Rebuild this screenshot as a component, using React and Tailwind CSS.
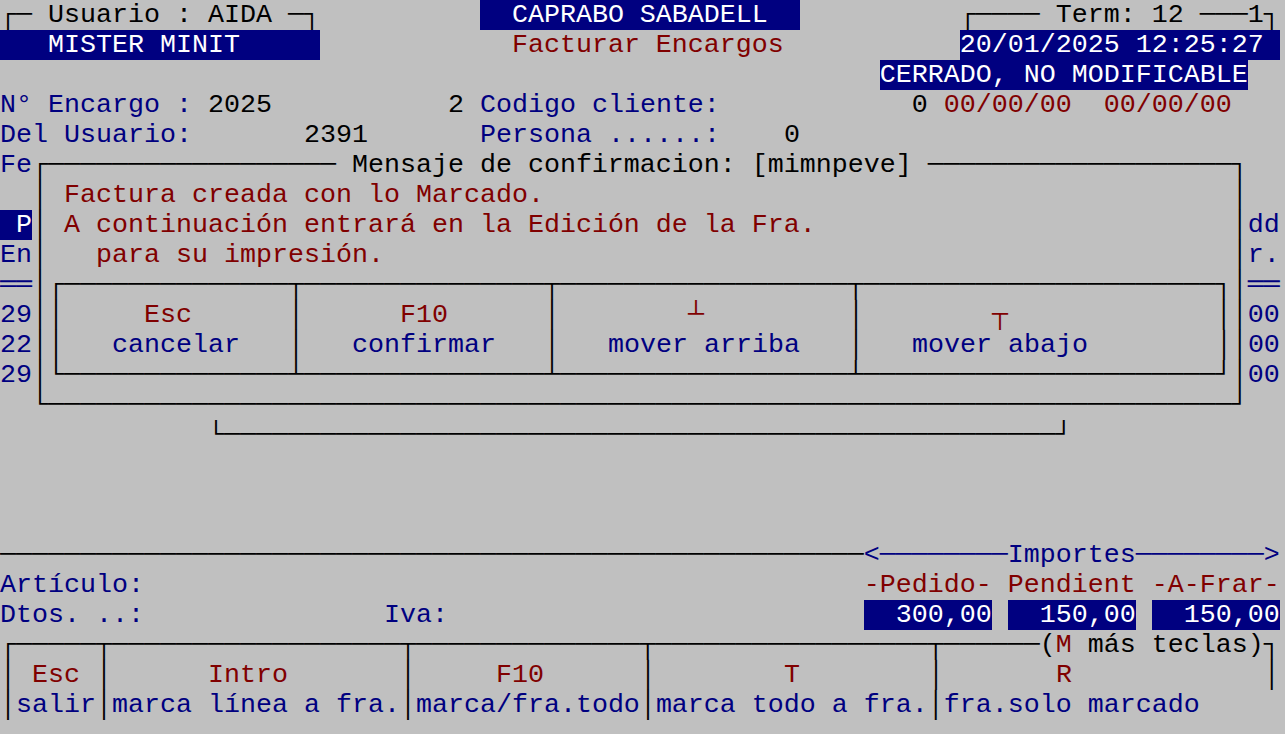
import React from 'react';

const L = (n) => '─'.repeat(n);
const S = (n) => ' '.repeat(n);

const tone = {
  k: 'text-black',
  b: 'text-[#000080]',
  r: 'text-[#800000]',
  h: 'bg-[#000080] text-white',
};

// each row is 80 cells wide, segments are [text, tone]
const screen = [
  [[`┌─ Usuario : AIDA ─┐`, 'k'], [S(10)], ['  CAPRABO SABADELL  ', 'h'], [S(10)], [`┌${L(4)} Term: 12 ${L(3)}1┐`, 'k']],
  [['   MISTER MINIT     ', 'h'], [S(12)], ['Facturar Encargos', 'r'], [S(11)], ['20/01/2025 12:25:27 ', 'h']],
  [[S(55)], ['CERRADO, NO MODIFICABLE', 'h']],
  [
    ['N° Encargo : ', 'b'], ['2025', 'k'], [S(11)], ['2', 'k'], [S(1)], ['Codigo cliente:', 'b'], [S(12)],
    ['0', 'k'], [S(1)], ['00/00/00', 'r'], [S(2)], ['00/00/00', 'r'],
  ],
  [['Del Usuario:', 'b'], [S(7)], ['2391', 'k'], [S(7)], ['Persona ......:', 'b'], [S(4)], ['0', 'k']],
  [['Fe', 'b'], [`┌${L(18)} Mensaje de confirmacion: [mimnpeve] ${L(19)}┐`, 'k']],
  [[S(2)], ['│ ', 'k'], ['Factura creada con lo Marcado.', 'r'], [S(43)], ['│', 'k']],
  [[' P', 'h'], ['│ ', 'k'], ['A continuación entrará en la Edición de la Fra.', 'r'], [S(26)], ['│', 'k'], ['dd', 'b']],
  [['En', 'b'], ['│', 'k'], [S(3)], ['para su impresión.', 'r'], [S(53)], ['│', 'k'], ['r.', 'b']],
  [['══', 'b'], [`│┌${L(14)}┬${L(15)}┬${L(18)}┬${L(22)}┐│`, 'k'], ['══', 'b']],
  [
    ['29', 'b'], ['││', 'k'], [S(5)], ['Esc', 'r'], [S(6)], ['│', 'k'], [S(6)], ['F10', 'r'], [S(6)], ['│', 'k'],
    [S(8)], ['┴', 'r'], [S(9)], ['│', 'k'], [S(8)], ['┬', 'r'], [S(13)], ['││', 'k'], ['00', 'b'],
  ],
  [
    ['22', 'b'], ['││', 'k'], [S(3)], ['cancelar', 'b'], [S(3)], ['│', 'k'], [S(3)], ['confirmar', 'b'], [S(3)], ['│', 'k'],
    [S(3)], ['mover arriba', 'b'], [S(3)], ['│', 'k'], [S(3)], ['mover abajo', 'b'], [S(8)], ['││', 'k'], ['00', 'b'],
  ],
  [['29', 'b'], [`│└${L(14)}┴${L(15)}┴${L(18)}┴${L(22)}┘│`, 'k'], ['00', 'b']],
  [[S(2)], [`└${L(74)}┘`, 'k']],
  [[S(13)], [`└${L(52)}┘`, 'k']],
  [],
  [],
  [],
  [[L(54), 'k'], [`<${L(8)}Importes${L(8)}>`, 'b']],
  [['Artículo:', 'b'], [S(45)], ['-Pedido-', 'r'], [S(1)], ['Pendient', 'r'], [S(1)], ['-A-Frar-', 'r']],
  [
    ['Dtos. ..:', 'b'], [S(15)], ['Iva:', 'b'], [S(26)], ['  300,00', 'h'], [S(1)], ['  150,00', 'h'], [S(1)],
    ['  150,00', 'h'],
  ],
  [[`┌${L(5)}┬${L(18)}┬${L(14)}┬${L(17)}┬${L(6)}(`, 'k'], ['M', 'r'], [' más teclas)┐', 'k']],
  [
    ['│ ', 'k'], ['Esc', 'r'], [' │', 'k'], [S(6)], ['Intro', 'r'], [S(7)], ['│', 'k'], [S(5)], ['F10', 'r'], [S(6)],
    ['│', 'k'], [S(8)], ['T', 'r'], [S(8)], ['│', 'k'], [S(7)], ['R', 'r'], [S(12)], ['│', 'k'],
  ],
  [
    ['│', 'k'], ['salir', 'b'], ['│', 'k'], ['marca línea a fra.', 'b'], ['│', 'k'], ['marca/fra.todo', 'b'],
    ['│', 'k'], ['marca todo a fra.', 'b'], ['│', 'k'], ['fra.solo marcado', 'b'],
  ],
  [],
];

const Row = ({ segments }) => (
  <div className="flex h-[30px] leading-[30px] whitespace-pre">
    {segments.map(([text, kind], i) => (
      <span key={i} className={`h-[30px] ${tone[kind] || 'text-black'}`}>
        {text}
      </span>
    ))}
  </div>
);

const App = () => {
  return (
    <div className="h-screen overflow-hidden bg-[#c0c0c0] font-['Liberation_Mono','DejaVu_Sans_Mono',monospace] text-[26.6667px]">
      {screen.map((segments, i) => (
        <Row key={i} segments={segments} />
      ))}
    </div>
  );
};

export default App;
